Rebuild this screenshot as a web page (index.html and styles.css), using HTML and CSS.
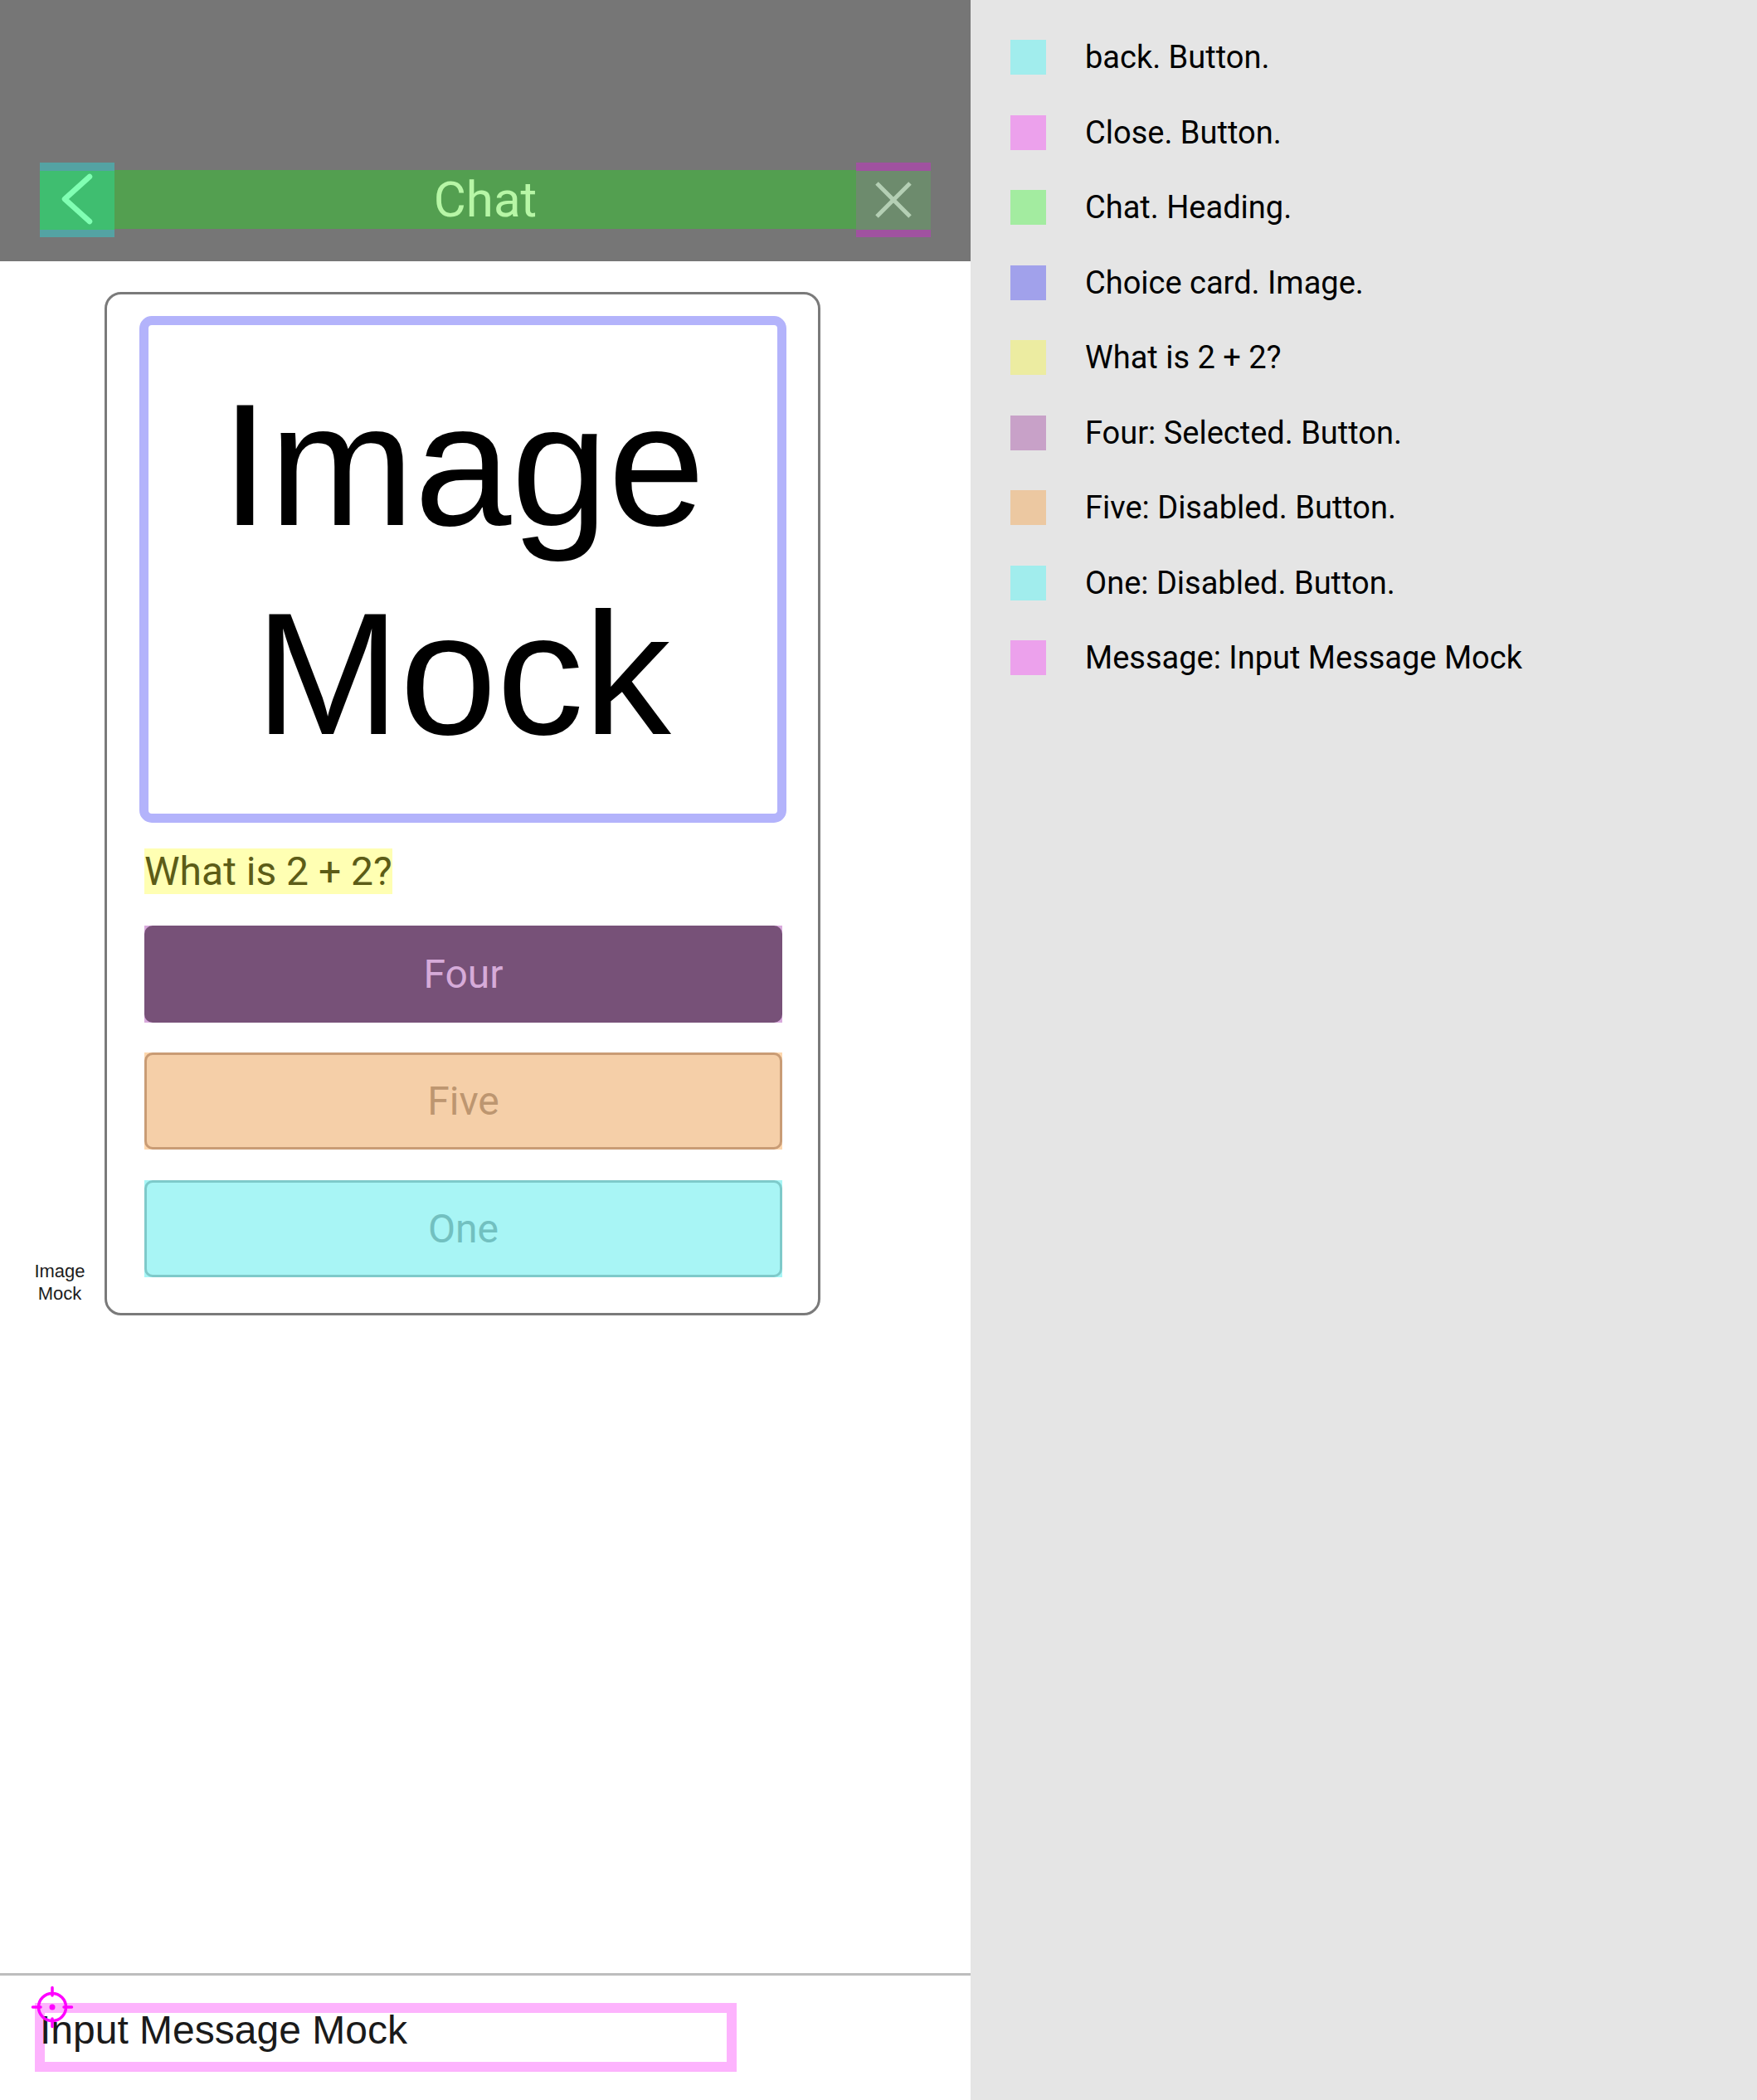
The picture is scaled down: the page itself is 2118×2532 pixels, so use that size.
FILE: index.html
```html
<!DOCTYPE html>
<html lang="en">
<head>
<meta charset="utf-8">
<title>Chat</title>
<link rel="stylesheet" href="styles.css">
</head>
<body>
<div class="screen">
  <div class="app">
    <header class="top">
      <div class="navbar">
        <button class="nav-btn back" aria-label="back">
          <svg width="90" height="90" viewBox="0 0 90 90"><polyline points="60,17 30,44 60,71" fill="none" stroke="#80ffb3" stroke-width="6.5" stroke-linecap="round" stroke-linejoin="round"/></svg>
        </button>
        <h1 class="title">Chat</h1>
        <button class="nav-btn close" aria-label="Close">
          <svg width="90" height="90" viewBox="0 0 90 90"><path d="M25 25 L65 65 M65 25 L25 65" fill="none" stroke="#b4cfb4" stroke-width="5"/></svg>
        </button>
      </div>
    </header>
    <main class="chat">
      <div class="msg-row">
        <div class="avatar">Image<br>Mock</div>
        <div class="card">
          <div class="card-image"><span>Image<br>Mock</span></div>
          <div class="question"><span>What is 2 + 2?</span></div>
          <div class="choice four"><div class="choice-btn">Four</div></div>
          <div class="choice five"><div class="choice-btn">Five</div></div>
          <div class="choice one"><div class="choice-btn">One</div></div>
        </div>
      </div>
    </main>
    <footer class="composer">
      <div class="input-field">
        <span class="input-text">Input Message Mock</span>
        <svg class="crosshair" width="56" height="56" viewBox="0 0 56 56">
          <circle cx="28" cy="28" r="16.5" fill="none" stroke="#ff00ff" stroke-width="3.5"/>
          <circle cx="28" cy="28" r="3.5" fill="#ff00ff"/>
          <path d="M28 4.5 V14 M28 42 V51.5 M4.5 28 H14 M42 28 H51.5" stroke="#ff00ff" stroke-width="3.5" stroke-linecap="round"/>
        </svg>
      </div>
    </footer>
  </div>
  <aside class="legend">
    <ul class="legend-list">
      <li class="legend-item"><span class="swatch sw-cyan"></span><span class="legend-text">back. Button.</span></li>
      <li class="legend-item"><span class="swatch sw-pink"></span><span class="legend-text">Close. Button.</span></li>
      <li class="legend-item"><span class="swatch sw-green"></span><span class="legend-text">Chat. Heading.</span></li>
      <li class="legend-item"><span class="swatch sw-blue"></span><span class="legend-text">Choice card. Image.</span></li>
      <li class="legend-item"><span class="swatch sw-yellow"></span><span class="legend-text">What is 2 + 2?</span></li>
      <li class="legend-item"><span class="swatch sw-mauve"></span><span class="legend-text">Four: Selected. Button.</span></li>
      <li class="legend-item"><span class="swatch sw-peach"></span><span class="legend-text">Five: Disabled. Button.</span></li>
      <li class="legend-item"><span class="swatch sw-cyan"></span><span class="legend-text">One: Disabled. Button.</span></li>
      <li class="legend-item"><span class="swatch sw-pink"></span><span class="legend-text">Message: Input Message Mock</span></li>
    </ul>
  </aside>
</div>
</body>
</html>
```
FILE: styles.css
```css
* { box-sizing: border-box; }
html, body { margin: 0; padding: 0; }
body { width: 2118px; height: 2532px; overflow: hidden; background: #ffffff; }

.screen { display: flex; width: 2118px; height: 2532px; }

.app {
  width: 1170px;
  height: 2532px;
  display: flex;
  flex-direction: column;
  background: #ffffff;
}

/* Header */
.top {
  height: 315px;
  flex: none;
  background: #767676;
  padding: 205px 48px 0 48px;
}
.navbar {
  height: 71px;
  display: flex;
  align-items: center;
  background: #539f50;
}
.nav-btn {
  flex: none;
  width: 90px;
  height: 90px;
  border: 0;
  padding: 0;
  margin: 0;
  display: flex;
  align-items: center;
  justify-content: center;
}
.nav-btn svg { display: block; }
.back {
  background: linear-gradient(to bottom, #54a3a3 0, #54a3a3 10px, #3fbe70 10px, #3fbe70 81px, #54a3a3 81px);
}
.close {
  background: linear-gradient(to bottom, #a052a0 0, #a052a0 10px, #6d8b6d 10px, #6d8b6d 81px, #a052a0 81px);
}
.title {
  flex: 1;
  margin: 0;
  text-align: center;
  font-family: Roboto, "Noto Sans", sans-serif;
  font-weight: 400;
  font-size: 60px;
  line-height: 71px;
  color: #b7f6a6;
}

/* Chat area */
.chat { flex: 1; }
.msg-row {
  display: flex;
  align-items: flex-end;
  margin-top: 37px;
  padding-left: 24px;
}
.avatar {
  width: 96px;
  padding-bottom: 13px;
  text-align: center;
  font-family: "Liberation Sans", Arial, sans-serif;
  font-size: 22px;
  line-height: 27px;
  color: #1c1c1c;
}
.card {
  margin-left: 6px;
  width: 863px;
  border: 3px solid #7a7a7a;
  border-radius: 20px;
  padding: 26px 37px 43px 39px;
}
.card-image {
  width: 780px;
  height: 611px;
  border: 11px solid #b3b3fb;
  border-radius: 15px;
  display: flex;
  align-items: center;
  justify-content: center;
  text-align: center;
  font-family: "Liberation Sans", Arial, sans-serif;
  font-size: 210px;
  line-height: 252px;
  color: #000000;
}
.question {
  margin-top: 31px;
  padding-left: 6px;
  height: 55px;
}
.question span {
  display: inline-block;
  background: #ffffb3;
  color: #5c5c17;
  font-family: Roboto, "Noto Sans", sans-serif;
  font-size: 48px;
  line-height: 55px;
}
.choice {
  margin-left: 6px;
  width: 769px;
  height: 117px;
}
.four { margin-top: 38px; background: #d8a9dc; }
.five { margin-top: 36px; background: #fdd7ae; }
.one { margin-top: 37px; background: #a8f6f6; }
.choice-btn {
  height: 100%;
  border-radius: 10px;
  display: flex;
  align-items: center;
  justify-content: center;
  font-family: Roboto, "Noto Sans", sans-serif;
  font-size: 48px;
}
.four .choice-btn { background: #775178; color: #d6abd9; }
.five .choice-btn { background: #f5cfa8; border: 3px solid #c99c75; color: #bd9670; }
.one .choice-btn { background: #a8f5f5; border: 3px solid #7ecaca; color: #72c0c0; }

/* Composer */
.composer {
  height: 153px;
  flex: none;
  border-top: 3px solid #bdbdbd;
  padding: 33px 0 0 42px;
}
.input-field {
  position: relative;
  width: 846px;
  height: 83px;
  border: 12px solid #fdb3fd;
}
.input-text {
  display: block;
  margin-left: -6px;
  margin-top: -7px;
  font-family: "Liberation Sans", Arial, sans-serif;
  font-size: 48px;
  line-height: 55px;
  color: #1a1a1a;
  white-space: nowrap;
}
.crosshair {
  position: absolute;
  left: -19px;
  top: -35px;
}

/* Legend */
.legend {
  flex: 1;
  background: #e5e5e5;
  padding: 24px 0 0 48px;
}
.legend-list { list-style: none; margin: 0; padding: 0; }
.legend-item {
  height: 90.5px;
  display: flex;
  align-items: center;
}
.swatch {
  width: 43px;
  height: 42px;
  flex: none;
  margin-right: 47px;
}
.sw-cyan { background: #a1eded; }
.sw-pink { background: #eca1ec; }
.sw-green { background: #a3eca0; }
.sw-blue { background: #a1a1eb; }
.sw-yellow { background: #ececa1; }
.sw-mauve { background: #c8a1c8; }
.sw-peach { background: #ecc8a1; }
.legend-text {
  font-family: Roboto, "Noto Sans", sans-serif;
  font-size: 38px;
  color: #000000;
  white-space: nowrap;
}
```
